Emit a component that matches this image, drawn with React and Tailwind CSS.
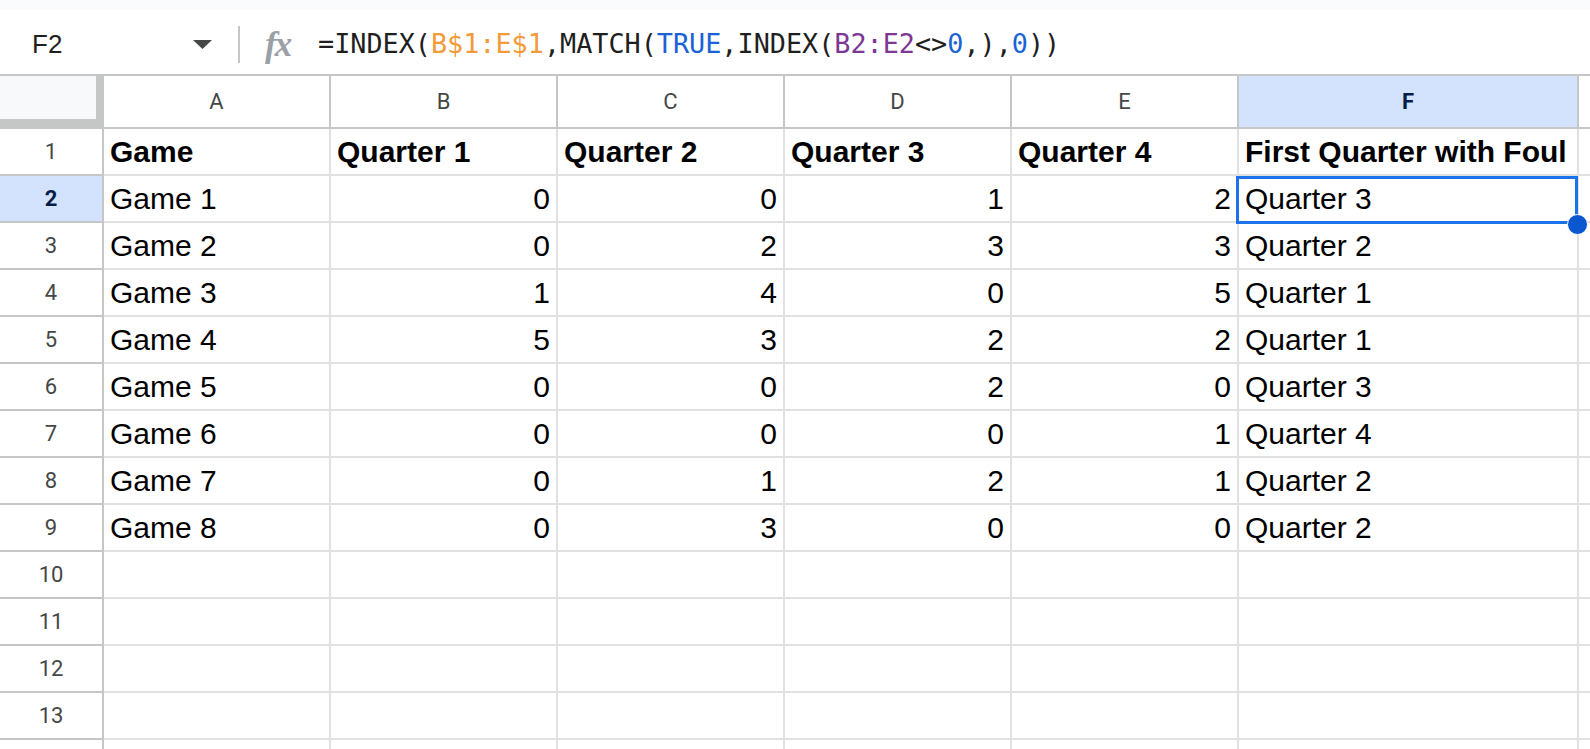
import React from 'react';

const cols = ['A', 'B', 'C', 'D', 'E', 'F'];
const header = ['Game', 'Quarter 1', 'Quarter 2', 'Quarter 3', 'Quarter 4', 'First Quarter with Foul'];
const data = [
    ['Game 1', 0, 0, 1, 2, 'Quarter 3'],
    ['Game 2', 0, 2, 3, 3, 'Quarter 2'],
    ['Game 3', 1, 4, 0, 5, 'Quarter 1'],
    ['Game 4', 5, 3, 2, 2, 'Quarter 1'],
    ['Game 5', 0, 0, 2, 0, 'Quarter 3'],
    ['Game 6', 0, 0, 0, 1, 'Quarter 4'],
    ['Game 7', 0, 1, 2, 1, 'Quarter 2'],
    ['Game 8', 0, 3, 0, 0, 'Quarter 2'],
];

// widths incl. right border
const colW = ['w-[227px]', 'w-[227px]', 'w-[227px]', 'w-[227px]', 'w-[227px]', 'w-[340px]'];

const FormulaBar = () => (
    <div className="h-[66px] pt-[4px] flex items-center bg-white border-b-2 border-[#c4c7c5]">
        <div className="w-[193px] pl-[32px] text-[26px] text-[#1f1f1f] font-['Liberation_Sans',Arial,sans-serif]">F2</div>
        <svg width="19" height="9" viewBox="0 0 19 9" className="shrink-0">
            <path d="M0 0 L19 0 L9.5 9 Z" fill="#444746" />
        </svg>
        <div className="ml-[26px] w-[2px] h-[37px] bg-[#c4c7c5]" />
        <div className="ml-[25px] w-[34px] text-[35px] leading-none italic font-bold text-[#9aa0a6] font-['Liberation_Serif',serif] tracking-[-2px]">fx</div>
        <div className="ml-[19px] text-[26.8px] text-[#1f1f1f] font-['DejaVu_Sans_Mono',monospace] whitespace-nowrap">
            =INDEX(<span className="text-[#f29b3a]">B$1:E$1</span>,MATCH(<span className="text-[#1a62d6]">TRUE</span>,INDEX(<span className="text-[#7e3794]">B2:E2</span>{'<>'}<span className="text-[#1a62d6]">0</span>,),<span className="text-[#1a62d6]">0</span>))
        </div>
    </div>
);

const ColumnHeader = () => (
    <div className="flex h-[53px] font-['Roboto',Arial,sans-serif] text-[22px]">
        <div className="w-[104px] shrink-0 bg-[#f8f9fa] border-r-[8px] border-b-[10px] border-[#c4c7c5]" />
        {cols.map((c, i) => (
            <div
                key={c}
                className={`${colW[i]} shrink-0 flex items-center justify-center border-r-2 border-b-2 border-[#c4c7c5] ${c === 'F' ? 'bg-[#d3e3fd] font-bold text-[#041e49]' : 'bg-white text-[#444746]'}`}
            >
                {c}
            </div>
        ))}
        <div className="flex-1 border-b-2 border-[#c4c7c5] bg-white" />
    </div>
);

const Row = ({ n, cells, bold, selected, hideNum }) => (
    <div className="flex h-[47px]">
        <div className={`w-[104px] shrink-0 flex items-center justify-center border-r-2 border-b-2 border-[#c4c7c5] font-['Roboto',Arial,sans-serif] text-[22px] ${selected ? 'bg-[#d3e3fd] font-bold text-[#041e49]' : 'bg-white text-[#444746]'}`}>
            {hideNum ? '' : n}
        </div>
        {cols.map((c, i) => {
            const v = cells ? cells[i] : '';
            const isNum = typeof v === 'number';
            return (
                <div
                    key={c}
                    className={`${colW[i]} shrink-0 relative flex items-end pb-0 border-r-2 border-b-2 border-[#e1e1e1] text-[30px] text-black whitespace-nowrap ${isNum ? 'justify-end pr-[6px]' : 'pl-[6px]'} ${bold ? 'font-bold' : ''}`}
                >
                    {v}
                    {selected && c === 'F' ? (
                        <>
                            <div className="absolute z-10 left-[-3px] top-0 w-[342px] h-[48px] border-[3px] border-[#1a73e8]" />
                            <div className="absolute z-20 left-[328px] top-[38px] w-[21px] h-[21px] rounded-full bg-[#0b57d0] border-[1.5px] border-white" />
                        </>
                    ) : null}
                </div>
            );
        })}
        <div className="flex-1 border-b-2 border-[#e1e1e1]" />
    </div>
);

export default function App() {
    return (
        <div className="w-[1590px] h-[749px] overflow-hidden bg-white font-['Liberation_Sans',Arial,sans-serif]">
            <div className="h-[10px] bg-[#f9fbfd]" />
            <FormulaBar />
            <ColumnHeader />
            <Row n={1} cells={header} bold />
            {data.map((r, i) => (
                <Row key={i} n={i + 2} cells={r} selected={i === 0} />
            ))}
            {[10, 11, 12, 13].map(n => (
                <Row key={n} n={n} />
            ))}
            <Row n={14} hideNum />
        </div>
    );
}
